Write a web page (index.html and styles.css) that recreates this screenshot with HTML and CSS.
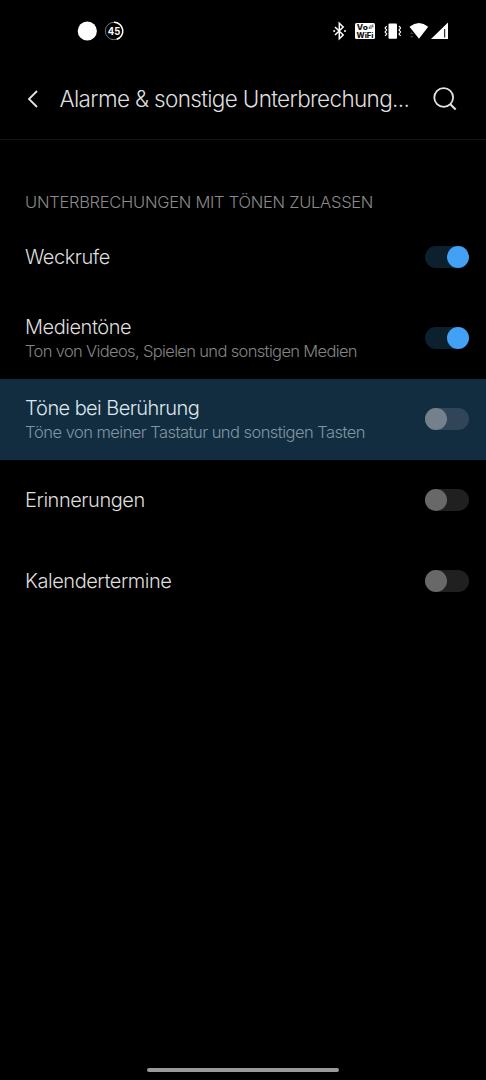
FILE: index.html
```html
<!DOCTYPE html>
<html lang="de">
<head>
<meta charset="utf-8">
<title>Alarme &amp; sonstige Unterbrechungen</title>
<link rel="stylesheet" href="styles.css">
</head>
<body>
<div class="screen">
  <div class="statusbar">
    <svg width="486" height="62" viewBox="0 0 486 62" aria-hidden="true">
      <circle cx="87.300" cy="31" r="9.600" fill="#fff"/>
      <circle cx="114" cy="31" r="8.700" fill="none" stroke="#777" stroke-width="1"/>
      <path d="M114 22.300a8.700 8.700 0 0 1 2.700 17" fill="none" stroke="#fff" stroke-width="1.500"/>
      <text class="battery" x="114" y="35" text-anchor="middle" textLength="12.500" lengthAdjust="spacingAndGlyphs">45</text>
      <path d="M335 27l8.200 8-3.900 3.800V23.200l3.900 3.800-8.200 8" fill="none" stroke="#fff" stroke-width="1.500"/>
      <circle cx="334.200" cy="31" r="1" fill="#fff"/><circle cx="345" cy="31" r="1" fill="#fff"/>
      <rect x="355" y="23" width="20" height="16" rx="1.500" fill="#fff"/>
      <text class="wifi-label" x="356.800" y="30" textLength="11" lengthAdjust="spacingAndGlyphs">Vo</text>
      <path d="M369.300 29v-2.500M371 29v-4M372.800 27.500v-3" stroke="#222" stroke-width=".8"/>
      <text class="wifi-label" x="356.500" y="37.600" textLength="17" lengthAdjust="spacingAndGlyphs">WiFi</text>
      <rect x="388.500" y="23.500" width="8.500" height="15.200" rx="1" fill="#fff"/>
      <path d="M386.700 26l-1.600 2 1.600 2-1.600 2 1.600 2-1.600 2M399 26l1.600 2-1.600 2 1.600 2-1.600 2 1.600 2" fill="none" stroke="#fff" stroke-width="1.200"/>
      <path d="M409.500 26.700Q419 19.300 428.200 26.700L419 38.800Z" fill="#fff"/>
      <path d="M410 34l1.700-2 1.700 2zM410 36l1.700 2 1.700-2z" fill="#444"/>
      <path d="M448 22.500V39h-17z" fill="#fff"/><path d="M444.700 29v8.500" stroke="#000" stroke-width="1"/>
    </svg>
  </div>
  <header class="toolbar">
    <svg class="back" width="12" height="18" viewBox="0 0 12 18"><path d="M10 1L2 9l8 8" fill="none" stroke="#e4e4e4" stroke-width="1.800"/></svg>
    <h1 class="title">Alarme &amp; sonstige Unterbrechung...</h1>
    <svg class="search" width="24" height="24" viewBox="0 0 24 24"><circle cx="10.700" cy="10.500" r="9.400" fill="none" stroke="#e4e4e4" stroke-width="1.800"/><path d="M17.300 17.200l5.400 5.300" stroke="#e4e4e4" stroke-width="2"/></svg>
  </header>
  <main>
    <h2 class="section">UNTERBRECHUNGEN MIT TÖNEN ZULASSEN</h2>
    <div class="row"><div><div class="label">Weckrufe</div></div><span class="switch on"></span></div>
    <div class="row"><div><div class="label">Medientöne</div><div class="sub">Ton von Videos, Spielen und sonstigen Medien</div></div><span class="switch on"></span></div>
    <div class="row active"><div><div class="label">Töne bei Berührung</div><div class="sub">Töne von meiner Tastatur und sonstigen Tasten</div></div><span class="switch"></span></div>
    <div class="row"><div><div class="label">Erinnerungen</div></div><span class="switch"></span></div>
    <div class="row"><div><div class="label">Kalendertermine</div></div><span class="switch"></span></div>
  </main>
  <div class="home"></div>
</div>
</body>
</html>
```
FILE: styles.css
```css
* { box-sizing: border-box; }
body { margin: 0; background: #000; }
.screen { width: 486px; height: 1080px; display: flex; flex-direction: column; background: #000; color: #dedede; font-family: Inter, "Liberation Sans", sans-serif; font-weight: 300; overflow: hidden; }
.statusbar { height: 62px; }
.statusbar svg { display: block; }
.battery { font: 700 11px Inter, sans-serif; fill: #fff; }
.wifi-label { font: 800 7px Inter, sans-serif; fill: #111; }
.toolbar { height: 78px; padding: 0 29px 4px 27px; display: flex; align-items: center; border-bottom: 1px solid #161616; }
.back { flex: none; }
.title { margin: 0 0 0 20.5px; flex: 1; font-size: 22.5px; font-weight: 300; line-height: 30px; white-space: nowrap; letter-spacing: -.66px; }
.search { flex: none; }
main { flex: 1; }
.section { height: 77px; margin: 0; padding: 52px 25px 0; font-size: 16.5px; line-height: 20px; font-weight: 300; color: #8a8a8a; white-space: nowrap; letter-spacing: -.26px; }
.row { height: 81px; padding: 0 17.5px 2px 25px; display: flex; align-items: center; justify-content: space-between; }
.row.active { background: #122d40; color: #dde6ec; }
.label { font-size: 20px; line-height: 26px; letter-spacing: -.46px; }
.sub { margin-bottom: -2px; font-size: 16.5px; line-height: 23px; color: #858585; letter-spacing: -.65px; white-space: nowrap; }
.active .label { letter-spacing: -.58px; }
.active .sub { color: #8195a2; letter-spacing: -.54px; }
.switch { flex: none; width: 43.5px; height: 22px; border-radius: 11px; background: #202020; }
.switch::before { content: ""; display: block; width: 22px; height: 22px; border-radius: 50%; background: #686868; }
.switch.on { background: #0d202e; }
.switch.on::before { margin-left: 21.5px; background: #42a0f5; }
.active .switch { background: #304658; }
.active .switch::before { background: #74818c; }
.home { width: 192px; height: 4px; margin: 0 auto 8px; border-radius: 2px; background: #9a9a9a; }
```
